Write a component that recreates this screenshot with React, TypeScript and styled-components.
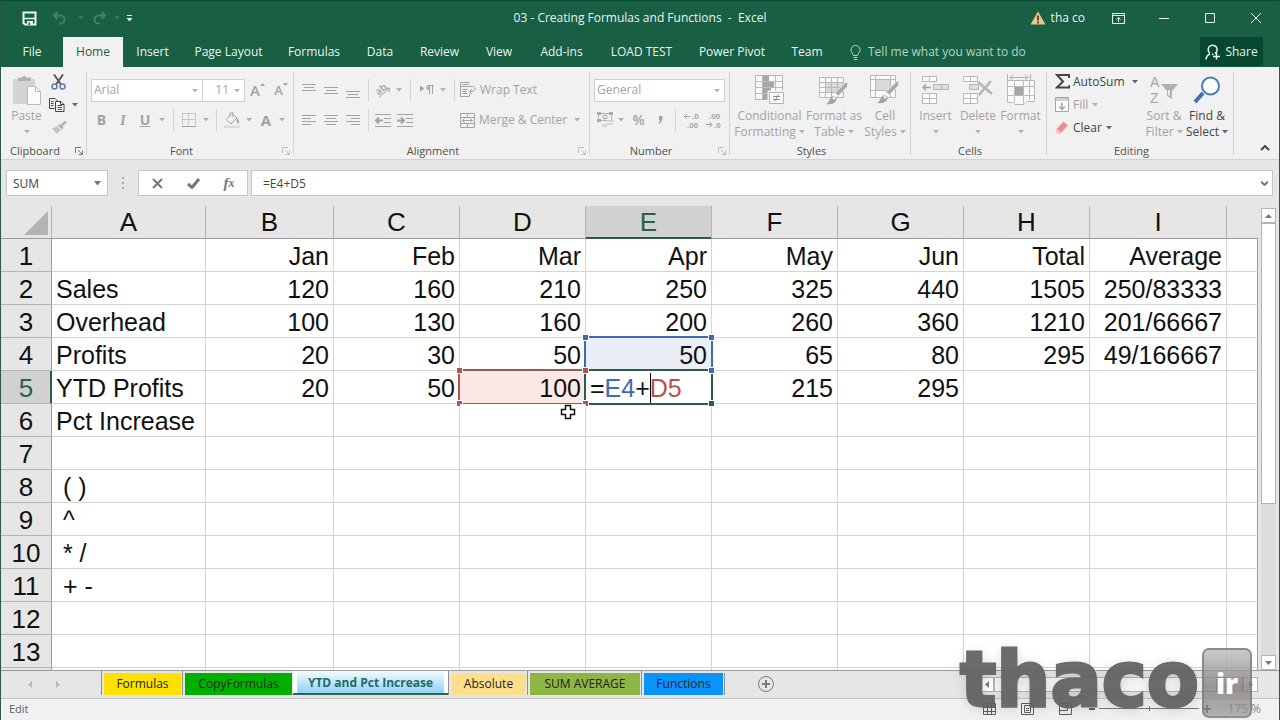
import React from 'react';
import styled, { createGlobalStyle, css } from 'styled-components';

const GlobalStyle = createGlobalStyle`
  *, *::before, *::after { box-sizing: border-box; }
  body { margin: 0; background: #e6e6e6; }
  button, input, select { font: inherit; color: inherit; margin: 0; padding: 0; border: 0; background: none; border-radius: 0; }
`;

const UI = '"Open Sans", "Noto Sans", sans-serif';
const SHEET = '"Liberation Sans", Arial, sans-serif';
const OFF = '#a3a3a3';

/* ---------- window ---------- */

const Window = styled.div`
  display: flex;
  flex-direction: column;
  height: 100vh;
  overflow: hidden;
  position: relative;
  border-left: 1px solid #2a5a43;
  border-right: 1px solid #2a5a43;
  background: #e6e6e6;
  font-family: ${UI};
  font-size: 12px;
  line-height: 16px;
  color: #444;
`;

const TitleBar = styled.header`
  display: grid;
  grid-template-columns: 1fr auto 1fr;
  align-items: center;
  height: 37px;
  flex: none;
  padding-bottom: 2px;
  background: #185f43;
  border-top: 1px solid #064a30;
  color: #eaf5ef;
`;

const QuickAccess = styled.div`
  display: flex;
  align-items: center;
  padding-left: 18px;
`;

const Title = styled.h1`
  margin: 0;
  font-size: 12px;
  line-height: 16px;
  font-weight: 400;
  white-space: pre;
`;

const WindowTools = styled.div`
  display: flex;
  align-items: center;
  justify-content: flex-end;
`;

const TitleButton = styled.button<{ $w: number; $dim?: boolean }>`
  display: flex;
  align-items: center;
  justify-content: center;
  width: ${p => p.$w}px;
  height: 32px;
  color: ${p => (p.$dim ? '#3f8265' : '#eaf5ef')};
`;

const Account = styled.a`
  display: flex;
  align-items: center;
  gap: 5px;
  margin-right: 10px;
  color: #eaf5ef;
  text-decoration: none;
`;

const MenuBar = styled.nav`
  display: flex;
  height: 30px;
  flex: none;
  background: #185f43;
  color: #eaf5ef;
`;

const MenuTab = styled.button<{ $w: number; $active?: boolean }>`
  width: ${p => p.$w}px;
  height: 30px;
  white-space: nowrap;
  ${p => p.$active && css`
    background: #f1f1f1;
    color: #1c6245;
  `}
`;

const TellMe = styled.label`
  display: flex;
  align-items: center;
  flex: 1;
  gap: 7px;
  padding-left: 14px;
  color: #b6d5c6;
`;

const TellInput = styled.input`
  width: 180px;
  outline: none;
  &::placeholder { color: #b6d5c6; opacity: 1; }
`;

const ShareButton = styled.button`
  display: flex;
  align-items: center;
  justify-content: center;
  gap: 4px;
  width: 63px;
  height: 29px;
  margin-right: 16px;
  background: #05482f;
`;

/* ---------- ribbon ---------- */

const Ribbon = styled.section`
  display: flex;
  height: 93px;
  flex: none;
  background: #f1f1f1;
  border-bottom: 1px solid #d2d2d2;
`;

const Group = styled.div<{ $w: number }>`
  display: flex;
  flex-direction: column;
  width: ${p => p.$w}px;
  height: 92px;
  flex: none;
  position: relative;
  &::after {
    content: '';
    position: absolute;
    right: 0;
    top: 5px;
    bottom: 4px;
    width: 1px;
    background: #d4d4d4;
  }
`;

const GroupBody = styled.div<{ $pad?: number }>`
  display: flex;
  height: 75px;
  padding: 3px 0 0 ${p => p.$pad ?? 0}px;
`;

const GroupLabel = styled.div`
  display: flex;
  align-items: center;
  justify-content: center;
  height: 17px;
  padding: 0 20px 0 2px;
  font-size: 11px;
  position: relative;
  color: #505050;
`;

const Launcher = styled.button<{ $dim?: boolean }>`
  display: flex;
  position: absolute;
  right: 4px;
  top: 5px;
  color: ${p => (p.$dim ? '#bdbdbd' : '#777')};
`;

const Rows = styled.div<{ $top?: number }>`
  display: flex;
  flex-direction: column;
  padding-top: ${p => p.$top ?? 0}px;
`;

const Row = styled.div<{ $h: number }>`
  display: flex;
  align-items: center;
  height: ${p => p.$h}px;
`;

const Tool = styled.button<{ $w: number; $on?: boolean; $left?: boolean; $gap?: number }>`
  display: flex;
  align-items: center;
  justify-content: ${p => (p.$left ? 'flex-start' : 'center')};
  gap: ${p => p.$gap ?? 4}px;
  width: ${p => p.$w}px;
  height: 22px;
  flex: none;
  white-space: nowrap;
  color: ${p => (p.$on ? '#444' : OFF)};
`;

const Glyph = styled.span<{ $serif?: boolean; $underline?: boolean; $size?: number; $weight?: number }>`
  font-size: ${p => p.$size ?? 14}px;
  font-weight: ${p => p.$weight ?? 700};
  line-height: 16px;
  font-family: ${p => (p.$serif ? '"Liberation Serif", serif' : UI)};
  font-style: ${p => (p.$serif ? 'italic' : 'normal')};
  text-decoration: ${p => (p.$underline ? 'underline' : 'none')};
`;

const Rule = styled.span<{ $w: number; $h?: number }>`
  display: flex;
  justify-content: center;
  width: ${p => p.$w}px;
  &::before {
    content: '';
    width: 1px;
    height: ${p => p.$h ?? 23}px;
    background: #d6d6d6;
  }
`;

const BigButton = styled.button<{ $w: number; $on?: boolean }>`
  display: flex;
  flex-direction: column;
  align-items: center;
  width: ${p => p.$w}px;
  height: 71px;
  padding-top: 3px;
  flex: none;
  white-space: nowrap;
  color: ${p => (p.$on ? '#444' : OFF)};
`;

const BigIcon = styled.span`
  display: flex;
  align-items: center;
  height: 34px;
  margin-bottom: 1px;
`;

const BigLine = styled.span`
  display: flex;
  align-items: center;
  gap: 3px;
  height: 16px;
`;

const Combo = styled.div<{ $w: number }>`
  position: relative;
  width: ${p => p.$w}px;
  height: 23px;
  margin-right: -1px;
  flex: none;
  border: 1px solid #cfcfcf;
  background: #fff;
  color: ${OFF};
  svg { position: absolute; right: 4px; top: 9px; pointer-events: none; }
`;

const ComboSelect = styled.select<{ $end?: boolean }>`
  appearance: none;
  width: 100%;
  height: 21px;
  padding: ${p => (p.$end ? '0 15px 0 0' : '0 15px 0 2px')};
  text-align: ${p => (p.$end ? 'right' : 'left')};
  text-align-last: ${p => (p.$end ? 'right' : 'left')};
`;

const RibbonEnd = styled.div`
  display: flex;
  flex: 1;
  align-items: flex-end;
  justify-content: flex-end;
  padding-right: 9px;
`;

/* ---------- formula bar ---------- */

const FormulaBar = styled.div`
  display: flex;
  align-items: center;
  height: 26px;
  margin: 10px 6px 10px 5px;
  flex: none;
`;

const Field = styled.div<{ $w?: number }>`
  display: flex;
  align-items: center;
  height: 26px;
  flex: ${p => (p.$w ? 'none' : '1')};
  width: ${p => (p.$w ? `${p.$w}px` : 'auto')};
  background: #fff;
  border: 1px solid #c6c6c6;
  color: #444;
`;

const FormulaField = styled(Field)`
  margin-left: 3px;
`;

const BarInput = styled.input<{ $pad: number }>`
  flex: 1;
  min-width: 0;
  height: 24px;
  padding: 1px 0 0 ${p => p.$pad}px;
  outline: none;
`;

const BarButton = styled.button<{ $w: number }>`
  display: flex;
  align-items: center;
  justify-content: center;
  width: ${p => p.$w}px;
  height: 24px;
  color: #777;
`;

const Grip = styled.span`
  display: flex;
  justify-content: center;
  width: 30px;
  color: #a8a8a8;
`;

/* ---------- sheet ---------- */

const Workspace = styled.main`
  display: flex;
  flex: 1;
  min-height: 0;
`;

const SheetArea = styled.div`
  flex: 1;
  min-width: 0;
  overflow: hidden;
`;

const Sheet = styled.table`
  width: 100%;
  table-layout: fixed;
  border-collapse: separate;
  border-spacing: 0;
  font-family: ${SHEET};
  font-size: 25px;
  line-height: 32px;
  color: #111;
`;

const Corner = styled.th`
  height: 33px;
  padding: 0 3px 3px 0;
  border-right: 1px solid #b4b4b4;
  border-bottom: 1px solid #9b9b9b;
  vertical-align: bottom;
  text-align: right;
  line-height: 0;
`;

const ColHead = styled.th<{ $active?: boolean; $blank?: boolean }>`
  height: 33px;
  padding: 0;
  font-size: 26px;
  font-weight: 400;
  border-right: ${p => (p.$blank ? 0 : 1)}px solid #b4b4b4;
  border-bottom: 1px solid ${p => (p.$active ? '#2b5c47' : '#9b9b9b')};
  box-shadow: ${p => (p.$active ? 'inset 0 -1px #2b5c47' : 'none')};
  background: ${p => (p.$active ? '#d0d1d0' : '#e6e6e6')};
  color: ${p => (p.$active ? '#2a6049' : '#111')};
`;

const RowHead = styled.th<{ $active?: boolean }>`
  height: 33px;
  padding: 2px 0 0;
  font-size: 26px;
  font-weight: 400;
  line-height: 30px;
  border-right: 1px solid ${p => (p.$active ? '#2b5c47' : '#9b9b9b')};
  border-bottom: 1px solid #b4b4b4;
  box-shadow: ${p => (p.$active ? 'inset -1px 0 #2b5c47' : 'none')};
  background: ${p => (p.$active ? '#d0d1d0' : '#e6e6e6')};
  color: ${p => (p.$active ? '#2a6049' : '#111')};
`;

const Cell = styled.td<{ $left?: boolean; $last?: boolean; $marked?: boolean }>`
  height: 33px;
  padding: 2px 4px 0;
  line-height: 30px;
  background: #fff;
  border-right: 1px solid ${p => (p.$last ? '#9b9b9b' : '#d4d4d4')};
  border-bottom: 1px solid #d4d4d4;
  text-align: ${p => (p.$left ? 'left' : 'right')};
  white-space: pre;
  ${p => p.$marked && css`
    position: relative;
    z-index: 1;
  `}
`;

const RangeBox = styled.span<{ $color: string; $fill: string }>`
  position: absolute;
  inset: -2px;
  border-style: solid;
  border-width: 2px;
  border-color: ${p => p.$color};
  background: ${p => p.$fill};
`;

const Handle = styled.i<{ $color: string; $x: 'left' | 'right'; $y: 'top' | 'bottom' }>`
  position: absolute;
  ${p => p.$x}: -4px;
  ${p => p.$y}: -4px;
  width: 7px;
  height: 7px;
  background: ${p => p.$color};
  border: 1px solid #fff;
`;

const CellText = styled.span`
  position: relative;
`;

const Ref = styled.span<{ $color: string }>`
  color: ${p => p.$color};
`;

const Caret = styled.span`
  display: inline-block;
  width: 1px;
  height: 30px;
  margin-right: -1px;
  vertical-align: top;
  background: #000;
`;

const Pointer = styled.svg`
  position: absolute;
  left: 100px;
  top: 0;
`;

const VScroll = styled.div`
  display: flex;
  flex-direction: column;
  width: 15px;
  margin: 2px 3px 0 3px;
  flex: none;
`;

const ScrollButton = styled.button`
  display: flex;
  align-items: center;
  justify-content: center;
  width: 15px;
  height: 15px;
  flex: none;
  background: #fff;
  border: 1px solid #b4b4b4;
  color: #777;
`;

const VTrack = styled.div`
  flex: 1;
  background: #dcdcdc;
`;

const VThumb = styled.div`
  height: 65%;
  background: #fff;
  border: 1px solid #b4b4b4;
`;

/* ---------- bottom bars ---------- */

const TabBar = styled.footer`
  display: flex;
  align-items: flex-start;
  height: 29px;
  flex: none;
  border-top: 1px solid #9b9b9b;
  border-bottom: 1px solid #c3c3c3;
`;

const NavButtons = styled.div`
  display: flex;
  width: 100px;
  height: 26px;
  padding-left: 15px;
  color: #b8b8b8;
`;

const NavButton = styled.button`
  display: flex;
  align-items: center;
  justify-content: center;
  width: 28px;
  height: 26px;
`;

const SheetTab = styled.button<{ $w: number; $fill: string; $active?: boolean }>`
  width: ${p => p.$w}px;
  height: 24px;
  padding: ${p => (p.$active ? '0 4px' : '1px 1px 0')};
  white-space: nowrap;
  color: #222;
  ${p => p.$active ? css`
    background: #fff;
    border-bottom: 2px solid #2c6650;
    color: #226a68;
    font-weight: 700;
  ` : css`
    border-left: 1px solid #8f8f8f;
  `}
  > span {
    display: block;
    height: 22px;
    line-height: ${p => (p.$active ? 24 : 22)}px;
    margin-left: ${p => (p.$active ? 0 : 1)}px;
    background: ${p => p.$fill};
  }
`;

const TabEnd = styled.span`
  width: 1px;
  height: 22px;
  margin-top: 2px;
  background: #8f8f8f;
`;

const AddSheet = styled.button`
  display: flex;
  align-items: center;
  justify-content: center;
  width: 82px;
  height: 26px;
  color: #7c7c7c;
`;

const HScroll = styled.div`
  display: flex;
  width: 279px;
  height: 15px;
  margin: 6px 21px 0 auto;
`;

const HTrack = styled.div`
  flex: 1;
  background: #dcdcdc;
  border: 1px solid #b4b4b4;
`;

const HThumb = styled.div`
  width: 90%;
  height: 13px;
  background: #f6f6f6;
  border-right: 1px solid #b4b4b4;
`;

const StatusBar = styled.div`
  display: flex;
  align-items: center;
  justify-content: space-between;
  height: 21px;
  flex: none;
  padding: 0 18px 2px 8px;
  background: #f1f1f1;
  font-size: 11px;
  color: #5c5c5c;
`;

const StatusTools = styled.div`
  display: flex;
  align-items: center;
`;

const StatusButton = styled.button<{ $w: number }>`
  display: flex;
  align-items: center;
  justify-content: center;
  width: ${p => p.$w}px;
  height: 18px;
`;

const ZoomTrack = styled.span`
  display: flex;
  justify-content: center;
  align-items: center;
  width: 100px;
  height: 7px;
  background: linear-gradient(#777, #777) center / 100% 1px no-repeat;
  &::before { content: ''; width: 1px; height: 5px; background: #777; }
`;

const ZoomValue = styled.span`
  margin-left: 12px;
  font-size: 12px;
  color: #8a8a8a;
`;

/* ---------- site logo ---------- */

const SiteMark = styled.div`
  position: absolute;
  right: 27px;
  bottom: 2px;
  display: flex;
  align-items: flex-end;
  gap: 3px;
  pointer-events: none;
`;

const SiteName = styled.span`
  font-family: "DejaVu Sans", sans-serif;
  font-weight: 700;
  font-size: 76px;
  line-height: 76px;
  color: #615f5d;
  -webkit-text-stroke: 3px #615f5d;
  opacity: 0.92;
  text-shadow: 0 2px 12px rgba(80, 80, 80, 0.28);
`;

const SiteKey = styled.span`
  display: flex;
  align-items: center;
  justify-content: center;
  width: 50px;
  height: 70px;
  border: 2px solid rgba(130, 127, 127, 0.8);
  border-radius: 7px;
  background: linear-gradient(rgba(190, 188, 188, 0.8), rgba(122, 118, 118, 0.75) 55%, rgba(150, 148, 148, 0.7));
  font-weight: 800;
  font-size: 28px;
  color: #fff;
`;

/* ---------- icons ---------- */

type IconProps = { w: number; h: number; children: React.ReactNode; sw?: number };
const Icon = ({ w, h, sw = 1, children }: IconProps) => (
  <svg width={w} height={h} viewBox={`0 0 ${w} ${h}`} fill="none" stroke="currentColor" strokeWidth={sw} aria-hidden="true">
    {children}
  </svg>
);

const Arrow = () => (
  <svg width="6" height="4" viewBox="0 0 6 4" aria-hidden="true"><path d="M0 0h6L3 3.5z" fill="currentColor" fillOpacity="0.8" /></svg>
);

const SaveIcon = () => (
  <Icon w={15} h={15} sw={2}><path d="M1.500 1.500h12v12H3l-1.500-1.500z" /><path d="M2 7.500h11" strokeWidth={1.500} /><path d="M5 10h6v4H5z" fill="currentColor" stroke="none" /><path d="M6.500 11.500h1.500v2.500h-1.500z" fill="#185f43" stroke="none" /></Icon>
);
const UndoIcon = () => <Icon w={15} h={14} sw={2}><path d="M5.500 1L2 4.500 5.500 8M2 4.500h6.500a4 4 0 010 8H7" /></Icon>;
const RedoIcon = () => <Icon w={15} h={14} sw={2}><path d="M9.500 1L13 4.500 9.500 8M13 4.500H6.500a4 4 0 000 8H8" /></Icon>;
const CustomizeIcon = () => <Icon w={7} h={7}><path d="M1 .5h5" /><path d="M.5 3h6L3.500 6.500z" fill="currentColor" stroke="none" /></Icon>;
const WarnIcon = () => (
  <svg width="16" height="14" viewBox="0 0 16 14" aria-hidden="true"><path d="M8 .5L15.500 13.500H.5z" fill="#e8c68c" /><path d="M7 4.500h2V9.500H7zM7 10.500h2v2H7z" fill="#7a3c22" /></svg>
);
const DisplayIcon = () => <Icon w={13} h={11}><path d="M.5.5h12v10H.5zM.5 2.500h12M6.500 9V4.500M4.500 6.500l2-2 2 2" /></Icon>;
const MinIcon = () => <Icon w={10} h={10}><path d="M0 5.500h10" /></Icon>;
const MaxIcon = () => <Icon w={10} h={10}><path d="M.5.5h9v9h-9z" /></Icon>;
const CloseIcon = () => <Icon w={10} h={10}><path d="M0 0l10 10M10 0L0 10" /></Icon>;
const BulbIcon = () => <Icon w={11} h={15}><path d="M3.500 10.500c0-2-2.500-2.500-2.500-5.500a4.500 4.500 0 019 0c0 3-2.500 3.500-2.500 5.500zM3.500 12.500h4M4 14.500h3" /></Icon>;
const ShareIcon = () => <Icon w={16} h={16} sw={1.500}><path d="M1 15.500c.3-3 1.500-4.500 4-5.500M10 9.500a4.500 4.500 0 10-5-.2M7 10.500l1.500-.3M11.500 9v6.500M8 12.500h7" /></Icon>;

const PasteIcon = () => (
  <Icon w={28} h={32}>
    <path d="M0 5h22v25H0z" fill="#d5d3d6" stroke="none" /><path d="M5 7V3.500h4a2.500 2.500 0 014.500 0h4.500V7z" fill="#b3b1b5" stroke="none" />
    <path d="M14.500 12.500h8l5 5v13h-13z" fill="#fbfbfd" stroke="#b9b8c4" /><path d="M22.500 12.500v5h5" stroke="#b9b8c4" />
  </Icon>
);
const CutIcon = () => (
  <Icon w={15} h={16}><path d="M3 .5l7 10M12 .5l-7 10" stroke="#5a5a5a" strokeWidth={2} /><circle cx="3.500" cy="12.500" r="2.500" stroke="#5b7fae" strokeWidth={1.500} /><circle cx="11.500" cy="12.500" r="2.500" stroke="#5b7fae" strokeWidth={1.500} /></Icon>
);
const CopyIcon = () => (
  <Icon w={16} h={14}><path d="M5.500 10.500h-5V.5H6l2 2v1" /><path d="M6.500 3.500H12l3 3v7H6.500z" fill="#fff" /><path d="M2 3.500h2.500M2 5.500h2.500M2 7.500h2.500M8.500 7.500h4.500M8.500 9.500h4.500M8.500 11.500h4.500M11.500 3.500v3H15" /></Icon>
);
const PainterIcon = () => (
  <Icon w={15} h={13}><path d="M0 8l5-3 4 4-4 4z" fill="#c4c4c4" stroke="none" /><path d="M6 4l2-1 3.500 4-1.500 1.500z" fill="#a8a8a8" stroke="none" /><path d="M9.500 4.500L14 .5" strokeWidth={2.500} stroke="#b2b2b2" /></Icon>
);
const BordersIcon = () => (
  <Icon w={14} h={14}><path d="M.5.5h13M.5.5v12M6.500.5v12M13.500.5v12M.5 6.500h13" strokeDasharray="1 1" /><path d="M0 13.500h14" /></Icon>
);
const BucketIcon = () => (
  <Icon w={17} h={16}><path d="M8 1.500L2 7.500l5 4.500 6-6-5-4.500zM6 4V1.500a1.500 1.500 0 013 0V5" /><path d="M13 6c2 1.500 2.500 3.500 1.500 6-2-1-2-3-1.500-6z" fill="currentColor" stroke="none" /><path d="M0 13.500h16v2.500H0z" fill="#dcdae0" stroke="none" /></Icon>
);
const GrowFont = ({ up }: { up?: boolean }) => (
  <>
    <Glyph $size={up ? 15 : 13} $weight={600}>A</Glyph>
    <svg width="5" height="14" viewBox="0 0 5 14" aria-hidden="true"><path d={up ? 'M0 3h5L2.500 0z' : 'M0 0h5L2.500 3z'} fill="currentColor" /></svg>
  </>
);
const Lines = ({ d }: { d: string }) => <Icon w={14} h={18}><path d={d} /></Icon>;
const OrientIcon = () => (
  <Icon w={18} h={17}>
    <text x="2" y="11" fontSize="10" fontWeight="600" fontFamily={UI} stroke="none" fill="currentColor" transform="rotate(-40 7 9)">ab</text>
    <path d="M5 15.500L15 6.500M15.500 6l-4 .5M15.500 6L15 10" />
  </Icon>
);
const DirectionIcon = () => (
  <Icon w={15} h={12}><path d="M0 1.500v6L4.500 4.500z" fill="currentColor" stroke="none" /><path d="M14 1.500H8.500a2 2 0 000 4h1M9.500 1v9M12.500 1v9" /><path d="M8 2h2v4H8z" fill="currentColor" stroke="none" /></Icon>
);
const IndentIcon = ({ out }: { out?: boolean }) => (
  <Icon w={16} h={13}><path d="M0 .5h16M9 4.500h7M9 8.500h7M0 12.500h16" /><path d={out ? 'M8 6.500H1M4 3.500L1 6.500l3 3' : 'M0 6.500h7M4 3.500l3 3-3 3'} strokeWidth={2} /></Icon>
);
const WrapIcon = () => (
  <Icon w={16} h={16}><path d="M.5 5.500v9h9v-3M.5 5.500V.5h9M.5 4.500h12M2.500 7.500h5M2.500 9.500h4M2.500 11.500h5M2.500 2.500h6" /><path d="M12.500 4.500c3.500 0 3.500 5-1 5H10M12 7l-2.500 2.500L12 12" /></Icon>
);
const MergeIcon = () => (
  <Icon w={15} h={15}><path d="M.5.5h14v14H.5zM.5 4.500h14M.5 10.500h14M7.500.5v4M7.500 10.500v4M2.500 7.500h10M4.500 5.500l-2 2 2 2M10.500 5.500l2 2-2 2" /></Icon>
);
const CurrencyIcon = () => (
  <Icon w={17} h={16}><path d="M1.500 1.500h13v7h-13z" stroke="#b4b4b4" /><path d="M0 0h4v3H0zM12 0h4v3h-4zM0 7h4v3H0z" fill="#ababab" stroke="none" /><circle cx="8" cy="5" r="2" /><path d="M10 8h7v2h-7zM9 11h7v2H9zM5 12h5v3H5z" fill="#d6d6d6" stroke="none" /></Icon>
);
const decimalText = (x: number, y: number, t: string) => (
  <text x={x} y={y} fontSize="8" fontWeight="600" fontFamily={SHEET} stroke="none" fill="currentColor">{t}</text>
);
const IncDecimal = () => <Icon w={16} h={18}><path d="M.5 5.500H6M3 3L.5 5.500 3 8" />{decimalText(8, 8, '.0')}{decimalText(3, 17, '.00')}</Icon>;
const DecDecimal = () => <Icon w={16} h={18}><path d="M0 13.500h6M3.500 11L6 13.500 3.500 16" />{decimalText(3, 8, '.00')}{decimalText(8, 17, '.0')}</Icon>;
const CondIcon = () => (
  <Icon w={30} h={30}>
    <path d="M.5.5h27v24H.5z" fill="#fafafa" stroke="#b4b4b4" /><path d="M.5 6.500h27M.5 12.500h27M.5 18.500h27M7.500.5v24M13.500.5v24M20.500.5v24" stroke="#bcbcbc" />
    <path d="M8 1h6v5h-6zM8 7h11v5H8zM8 13h8v5H8zM8 19h5v5H8z" fill="#a9a6aa" stroke="none" />
    <path d="M13.500 16.500h16v13h-16z" fill="#fafafa" stroke="#f1f1f1" strokeWidth={2} /><path d="M14.500 17.500h14v11h-14z" fill="#fafafa" stroke="#b4b4b4" /><path d="M18 21.500h7M18 24.500h7M23.500 19.500l-4 7" stroke="#8f8f8f" />
  </Icon>
);
const Brush = ({ x, y }: { x: number; y: number }) => (
  <g transform={`translate(${x} ${y})`} stroke="none"><path d="M20 0l2 .5-.5 4-9 9.500-4-3z" fill="#aaa8ab" stroke="#f1f1f1" /><path d="M0 22c3-1 3-5 6-7.500 3-1 5 1 4.500 3.500C9 22 4 23 0 22z" fill="#a5a3a6" /><circle cx="8" cy="16" r="1.500" fill="#f1f1f1" /></g>
);
const FormatTableIcon = () => (
  <Icon w={30} h={30}>
    <path d="M.5 2.500h24v20H.5z" fill="#fafafa" stroke="#b8b8b8" /><path d="M7 8h17v9H7z" fill="#d9d8dd" stroke="none" /><path d="M.5 7.500h24M.5 12.500h24M.5 17.500h24M6.500 2.500v20M12.500 2.500v20M18.500 2.500v20" stroke="#b8b8b8" />
    <Brush x={7} y={7} />
  </Icon>
);
const CellStylesIcon = () => (
  <Icon w={30} h={30}>
    <path d="M.5.5h25v22H.5z" fill="#fafafa" stroke="#b8b8b8" /><path d="M6 5h14v10H6z" fill="#d9d8dd" stroke="none" /><path d="M.5 4.500h25M.5 15.500h25M5.500.5v22M20.500.5v22" stroke="#b8b8b8" />
    <Brush x={7} y={6} />
  </Icon>
);
const InsertIcon = () => (
  <Icon w={27} h={28}>
    <path d="M.5.5h14v5H.5zM7.500.5v5" stroke="#b8b8b8" fill="#fff" /><path d="M.5 17.500h14v10H.5zM7.500 17.500v10M.5 22.500h14" stroke="#b8b8b8" fill="#fff" />
    <path d="M11.500 8.500h15v5h-15zM19.500 8.500v5" fill="#dddde0" stroke="#b8b8b8" /><path d="M1 11.500h8M4 8.500l-3 3 3 3" strokeWidth={1.500} />
  </Icon>
);
const DeleteIcon = () => (
  <Icon w={30} h={28}>
    <path d="M.5.5h14v5H.5zM7.500.5v5" stroke="#b8b8b8" fill="#fff" /><path d="M.5 17.500h14v10H.5zM7.500 17.500v10M.5 22.500h14" stroke="#b8b8b8" fill="#fff" />
    <path d="M6.500 8.500h9v5h-9z" fill="#dddde0" stroke="#b8b8b8" /><path d="M15 6l14 12M28 5L16 19" strokeWidth={2.500} stroke="#b4b4b4" />
  </Icon>
);
const FormatIcon = () => (
  <Icon w={28} h={32}>
    <path d="M.5 0v6M23.500 0v6M3 3.500h18M6 .5l-3 3 3 3M18 .5l3 3-3 3" stroke="#b0b0b0" />
    <path d="M.5 6.500h27v21H20l-3 3H8l-2-2H.5z" fill="#fafafa" stroke="#b8b8b8" /><path d="M.5 12.500h27M.5 21.500h27M7.500 6.500v22M16.500 6.500v23M22.500 6.500v20" stroke="#bcbcbc" />
    <path d="M8 13h8v8H8z" fill="#a8a6aa" stroke="none" />
  </Icon>
);
const SumIcon = () => <Icon w={15} h={15} sw={2}><path d="M14 4V1H2l6 6.500L2 13.500h12.500V11" /></Icon>;
const FillIcon = () => <Icon w={14} h={15}><path d="M.5.5h13v14H.5z" fill="#fff" /><path d="M1 1h12v3H1z" fill="#cfcfcf" stroke="none" /><path d="M7 5.500v7M4 9.500l3 3 3-3" strokeWidth={1.500} /></Icon>;
const EraserIcon = () => (
  <Icon w={14} h={14}><path d="M1.500 8L8.500.8l4.500 3.500L6 12z" fill="#ee8d94" stroke="none" /><path d="M1.500 8L6 12l-1 1H2.500L.5 11z" fill="#f6c3c6" stroke="none" /></Icon>
);
const SortIcon = () => (
  <Icon w={30} h={32}>
    <text x="1" y="13" fontSize="14" fontWeight="400" fontFamily={SHEET} stroke="none" fill="#a6a6a6">A</text>
    <text x="1" y="29" fontSize="14" fontWeight="400" fontFamily={SHEET} stroke="none" fill="#a6a6a6">Z</text>
    <path d="M12 10h17l-6 7v8l-5-3v-5z" fill="#b0b0b0" stroke="none" />
    <path d="M19 16v5l2 1V16z" fill="#e8e8e8" stroke="none" />
  </Icon>
);
const FindIcon = () => (
  <Icon w={28} h={28}><path d="M10 17L2 26" stroke="#3f6fae" strokeWidth={4} /><circle cx="17.500" cy="10" r="8.500" fill="#fff" stroke="#4a7ab8" strokeWidth={2} /></Icon>
);
const LaunchIcon = () => <Icon w={8} h={8}><path d="M.5 6V.5H6M3 3l4 4M7.500 3.500v4h-4" /></Icon>;

/* ---------- data ---------- */

const menu: [string, number][] = [
  ['File', 62], ['Home', 60], ['Insert', 59], ['Page Layout', 93], ['Formulas', 78], ['Data', 54], ['Review', 65],
  ['View', 54], ['Add-ins', 71], ['LOAD TEST', 89], ['Power Pivot', 92], ['Team', 58],
];

const columns = ['A', 'B', 'C', 'D', 'E', 'F', 'G', 'H', 'I'];
const columnWidths = [154, 128, 126, 126, 126, 126, 126, 126, 137];

const rows: string[][] = [
  ['', 'Jan', 'Feb', 'Mar', 'Apr', 'May', 'Jun', 'Total', 'Average'],
  ['Sales', '120', '160', '210', '250', '325', '440', '1505', '250/83333'],
  ['Overhead', '100', '130', '160', '200', '260', '360', '1210', '201/66667'],
  ['Profits', '20', '30', '50', '50', '65', '80', '295', '49/166667'],
  ['YTD Profits', '20', '50', '100', '', '215', '295', '', ''],
  ['Pct Increase'], [], [' ( )'], [' ^'], [' * /'], [' + -'], [], [],
];

const sheets: { name: string; w: number; fill: string; active?: boolean }[] = [
  { name: 'Formulas', w: 81, fill: '#ffe100' },
  { name: 'CopyFormulas', w: 111, fill: '#00b000' },
  { name: 'YTD and Pct Increase', w: 155, fill: 'linear-gradient(#f4fbfe, #8fd3f2)', active: true },
  { name: 'Absolute', w: 79, fill: '#ffdf8c' },
  { name: 'SUM AVERAGE', w: 114, fill: '#8db645' },
  { name: 'Functions', w: 83, fill: '#0a93f8' },
];

const BLUE = '#3f68ae';
const RED = '#b8504b';
const GREEN = '#2b5c47';
const BROWN = '#86605a';

/* cells that carry a range outline or the mouse pointer */
const marked = ['E4', 'D5', 'E5', 'D6'];

const Handles = ({ color }: { color: string }) => (
  <>
    <Handle $color={color} $x="left" $y="top" />
    <Handle $color={color} $x="right" $y="top" />
    <Handle $color={color} $x="left" $y="bottom" />
    <Handle $color={color} $x="right" $y="bottom" />
  </>
);

function CellContent({ id, text }: { id: string; text: string }) {
  if (id === 'E4') {
    return <><RangeBox $color={BLUE} $fill="#e9eef9"><Handles color={BLUE} /></RangeBox><CellText>{text}</CellText></>;
  }
  if (id === 'D5') {
    return <><RangeBox $color={`${BROWN} ${RED}`} $fill="#fde8e5"><Handles color={RED} /></RangeBox><CellText>{text}</CellText></>;
  }
  if (id === 'E5') {
    return (
      <>
        <RangeBox $color={GREEN} $fill="transparent">
          <Handle $color={RED} $x="left" $y="top" />
          <Handle $color={RED} $x="left" $y="bottom" />
          <Handle $color={BLUE} $x="right" $y="top" />
          <Handle $color={GREEN} $x="right" $y="bottom" />
        </RangeBox>
        <CellText>=<Ref $color="#4469b4">E4</Ref>+<Caret /><Ref $color="#bb5149">D5</Ref></CellText>
      </>
    );
  }
  if (id === 'D6') {
    return (
      <Pointer width="16" height="17" viewBox="0 0 16 17" aria-hidden="true">
        <path d="M5.500 1.500h5v4h4v5h-4v4h-5v-4h-4v-5h4z" fill="#fff" stroke="#111" strokeWidth="1.500" />
      </Pointer>
    );
  }
  return <>{text}</>;
}

function Caption({ children, launch, dim }: { children: string; launch?: boolean; dim?: boolean }) {
  return (
    <GroupLabel>
      {children}
      {launch && <Launcher $dim={dim} aria-label={`${children} settings`}><LaunchIcon /></Launcher>}
    </GroupLabel>
  );
}

function Big({ w, on, icon, lines }: { w: number; on?: boolean; icon: React.ReactNode; lines: string[] }) {
  return (
    <BigButton $w={w} $on={on}>
      <BigIcon>{icon}</BigIcon>
      <BigLine>{lines[0]}</BigLine>
      <BigLine>{lines[1]}<Arrow /></BigLine>
    </BigButton>
  );
}

export default function App() {
  return (
    <Window>
      <GlobalStyle />
      <TitleBar>
        <QuickAccess>
          <TitleButton $w={21} aria-label="Save"><SaveIcon /></TitleButton>
          <TitleButton $w={38} $dim aria-label="Undo"><UndoIcon /></TitleButton>
          <TitleButton $w={6} $dim aria-label="Undo history"><Arrow /></TitleButton>
          <TitleButton $w={30} $dim aria-label="Redo"><RedoIcon /></TitleButton>
          <TitleButton $w={6} $dim aria-label="Redo history"><Arrow /></TitleButton>
          <TitleButton $w={19} aria-label="Customize"><CustomizeIcon /></TitleButton>
        </QuickAccess>
        <Title>03 - Creating Formulas and Functions  -  Excel</Title>
        <WindowTools>
          <Account href="#account"><WarnIcon />tha co</Account>
          <TitleButton $w={46} aria-label="Ribbon display"><DisplayIcon /></TitleButton>
          <TitleButton $w={46} aria-label="Minimize"><MinIcon /></TitleButton>
          <TitleButton $w={46} aria-label="Maximize"><MaxIcon /></TitleButton>
          <TitleButton $w={46} aria-label="Close"><CloseIcon /></TitleButton>
        </WindowTools>
      </TitleBar>
      <MenuBar>
        {menu.map(([name, w]) => <MenuTab key={name} $w={w} $active={name === 'Home'}>{name}</MenuTab>)}
        <TellMe><BulbIcon /><TellInput placeholder="Tell me what you want to do" aria-label="Tell me" /></TellMe>
        <ShareButton><ShareIcon />Share</ShareButton>
      </MenuBar>

      <Ribbon>
        <Group $w={86}>
          <GroupBody $pad={5}>
            <Big w={41} icon={<PasteIcon />} lines={['Paste', '']} />
            <Rows>
              <Row $h={23}><Tool $w={22} $on aria-label="Cut"><CutIcon /></Tool></Row>
              <Row $h={23}><Tool $w={32} $on $gap={7} aria-label="Copy"><CopyIcon /><Arrow /></Tool></Row>
              <Row $h={23}><Tool $w={24} aria-label="Format painter"><PainterIcon /></Tool></Row>
            </Rows>
          </GroupBody>
          <Caption launch>Clipboard</Caption>
        </Group>

        <Group $w={207}>
          <GroupBody $pad={4}>
            <Rows $top={5}>
              <Row $h={30}>
                <Combo $w={112}><ComboSelect aria-label="Font"><option>Arial</option></ComboSelect><Arrow /></Combo>
                <Combo $w={43}><ComboSelect $end aria-label="Font size"><option>11</option></ComboSelect><Arrow /></Combo>
                <Tool $w={27} $gap={0} aria-label="Grow font"><GrowFont up /></Tool>
                <Tool $w={20} $gap={0} aria-label="Shrink font"><GrowFont /></Tool>
              </Row>
              <Row $h={30}>
                <Tool $w={21}><Glyph>B</Glyph></Tool>
                <Tool $w={22}><Glyph $serif $size={15}>I</Glyph></Tool>
                <Tool $w={22}><Glyph $underline>U</Glyph></Tool>
                <Tool $w={12} aria-label="Underline style"><Arrow /></Tool>
                <Rule $w={10} />
                <Tool $w={22} aria-label="Borders"><BordersIcon /></Tool>
                <Tool $w={12} aria-label="Border style"><Arrow /></Tool>
                <Rule $w={9} />
                <Tool $w={22} aria-label="Fill color"><BucketIcon /></Tool>
                <Tool $w={12} aria-label="Fill palette"><Arrow /></Tool>
                <Tool $w={22} aria-label="Font color"><Glyph $size={15}>A</Glyph></Tool>
                <Tool $w={10} aria-label="Font palette"><Arrow /></Tool>
              </Row>
            </Rows>
          </GroupBody>
          <Caption launch dim>Font</Caption>
        </Group>

        <Group $w={296}>
          <GroupBody $pad={4}>
            <Rows $top={5}>
              <Row $h={30}>
                <Tool $w={22} aria-label="Top align"><Lines d="M0 3.500h14M2 6.500h10M0 9.500h14" /></Tool>
                <Tool $w={22} aria-label="Middle align"><Lines d="M0 6.500h14M2 9.500h10M0 12.500h14" /></Tool>
                <Tool $w={22} aria-label="Bottom align"><Lines d="M0 10.500h14M2 13.500h10M0 16.500h14" /></Tool>
                <Rule $w={8} />
                <Tool $w={22} aria-label="Orientation"><OrientIcon /></Tool>
                <Tool $w={10} aria-label="Orientation menu"><Arrow /></Tool>
                <Rule $w={12} />
                <Tool $w={22} aria-label="Text direction"><DirectionIcon /></Tool>
                <Tool $w={10} aria-label="Direction menu"><Arrow /></Tool>
                <Rule $w={12} />
                <Tool $w={90} $left><WrapIcon />Wrap Text</Tool>
              </Row>
              <Row $h={30}>
                <Tool $w={22} aria-label="Align left"><Lines d="M0 4.500h14M0 7.500h9M0 10.500h14M0 13.500h9" /></Tool>
                <Tool $w={22} aria-label="Center"><Lines d="M0 4.500h14M2 7.500h10M0 10.500h14M2 13.500h10" /></Tool>
                <Tool $w={22} aria-label="Align right"><Lines d="M0 4.500h14M5 7.500h9M0 10.500h14M5 13.500h9" /></Tool>
                <Rule $w={8} />
                <Tool $w={22} aria-label="Decrease indent"><IndentIcon out /></Tool>
                <Tool $w={22} aria-label="Increase indent"><IndentIcon /></Tool>
                <Rule $w={44} $h={0} />
                <Tool $w={112} $left><MergeIcon />Merge &amp; Center</Tool>
                <Tool $w={10} aria-label="Merge menu"><Arrow /></Tool>
              </Row>
            </Rows>
          </GroupBody>
          <Caption launch dim>Alignment</Caption>
        </Group>

        <Group $w={140}>
          <GroupBody $pad={4}>
            <Rows $top={5}>
              <Row $h={30}>
                <Combo $w={131}><ComboSelect aria-label="Number format"><option>General</option></ComboSelect><Arrow /></Combo>
              </Row>
              <Row $h={30}>
                <Tool $w={22} aria-label="Accounting format"><CurrencyIcon /></Tool>
                <Tool $w={10} aria-label="Currency menu"><Arrow /></Tool>
                <Tool $w={25}><Glyph $size={14} $weight={600}>%</Glyph></Tool>
                <Tool $w={18} aria-label="Comma style"><Icon w={5} h={8}><path d="M1 0h3.500v3.500L2 7.500H.5L2 4H1z" fill="currentColor" stroke="none" /></Icon></Tool>
                <Rule $w={12} />
                <Tool $w={22} aria-label="Increase decimal"><IncDecimal /></Tool>
                <Tool $w={22} aria-label="Decrease decimal"><DecDecimal /></Tool>
              </Row>
            </Rows>
          </GroupBody>
          <Caption launch dim>Number</Caption>
        </Group>

        <Group $w={181}>
          <GroupBody $pad={4}>
            <Big w={71} icon={<CondIcon />} lines={['Conditional', 'Formatting']} />
            <Big w={58} icon={<FormatTableIcon />} lines={['Format as', 'Table']} />
            <Big w={44} icon={<CellStylesIcon />} lines={['Cell', 'Styles']} />
          </GroupBody>
          <Caption>Styles</Caption>
        </Group>

        <Group $w={136}>
          <GroupBody $pad={3}>
            <Big w={43} icon={<InsertIcon />} lines={['Insert', '']} />
            <Big w={42} icon={<DeleteIcon />} lines={['Delete', '']} />
            <Big w={43} icon={<FormatIcon />} lines={['Format', '']} />
          </GroupBody>
          <Caption>Cells</Caption>
        </Group>

        <Group $w={187}>
          <GroupBody $pad={8}>
            <Rows>
              <Row $h={23}>
                <Tool $w={74} $left $on $gap={3}><SumIcon />AutoSum</Tool>
                <Tool $w={12} $on aria-label="AutoSum menu"><Arrow /></Tool>
              </Row>
              <Row $h={23}><Tool $w={74} $left><FillIcon />Fill<Arrow /></Tool></Row>
              <Row $h={23}><Tool $w={74} $left $on><EraserIcon />Clear<Arrow /></Tool></Row>
            </Rows>
            <Big w={46} icon={<SortIcon />} lines={['Sort &', 'Filter']} />
            <Big w={40} on icon={<FindIcon />} lines={['Find &', 'Select']} />
          </GroupBody>
          <Caption>Editing</Caption>
        </Group>
        <RibbonEnd>
          <Tool $w={10} $on aria-label="Collapse ribbon"><Icon w={10} h={6} sw={2}><path d="M1 5l4-4 4 4" /></Icon></Tool>
        </RibbonEnd>
      </Ribbon>

      <FormulaBar>
        <Field $w={102}>
          <BarInput $pad={6} defaultValue="SUM" aria-label="Name box" />
          <BarButton $w={20} aria-label="Names"><Icon w={7} h={5}><path d="M0 0h7L3.500 4.500z" fill="currentColor" stroke="none" /></Icon></BarButton>
        </Field>
        <Grip><Icon w={2} h={13} sw={2}><path d="M1 0v13" strokeDasharray="2 3" /></Icon></Grip>
        <Field $w={110}>
          <BarButton $w={36} aria-label="Cancel"><Icon w={11} h={11} sw={2}><path d="M1 1l9 9M10 1L1 10" /></Icon></BarButton>
          <BarButton $w={36} aria-label="Enter"><Icon w={13} h={11} sw={3}><path d="M1 6l4 3.500L12 1" /></Icon></BarButton>
          <BarButton $w={36} aria-label="Insert function"><Glyph $serif $size={15}>f</Glyph><Glyph $serif $size={12}>x</Glyph></BarButton>
        </Field>
        <FormulaField>
          <BarInput $pad={11} defaultValue="=E4+D5" aria-label="Formula" />
          <BarButton $w={16} aria-label="Expand"><Icon w={7} h={5} sw={2}><path d="M0 .5L3.500 4 7 .5" /></Icon></BarButton>
        </FormulaField>
      </FormulaBar>

      <Workspace>
        <SheetArea>
          <Sheet>
            <colgroup>
              <col width={51} />
              {columnWidths.map((w, i) => <col key={i} width={w} />)}
              <col />
            </colgroup>
            <thead>
              <tr>
                <Corner aria-label="Select all"><svg width="24" height="24" viewBox="0 0 24 24"><path d="M24 0v24H0z" fill="#b3b3b3" /></svg></Corner>
                {columns.map(c => <ColHead key={c} $active={c === 'E'} scope="col">{c}</ColHead>)}
                <ColHead $blank />
              </tr>
            </thead>
            <tbody>
              {rows.map((cells, r) => (
                <tr key={r}>
                  <RowHead $active={r === 4} scope="row">{r + 1}</RowHead>
                  {columns.map((c, i) => (
                    <Cell key={c} $left={i === 0 || (c === 'E' && r === 4)} $marked={marked.includes(`${c}${r + 1}`)}>
                      <CellContent id={`${c}${r + 1}`} text={cells[i] ?? ''} />
                    </Cell>
                  ))}
                  <Cell $last />
                </tr>
              ))}
              <tr><RowHead />{columns.map(c => <Cell key={c} />)}<Cell $last /></tr>
            </tbody>
          </Sheet>
        </SheetArea>
        <VScroll>
          <ScrollButton aria-label="Scroll up"><Icon w={7} h={4}><path d="M0 4h7L3.500 0z" fill="currentColor" stroke="none" /></Icon></ScrollButton>
          <VTrack><VThumb /></VTrack>
          <ScrollButton aria-label="Scroll down"><Icon w={7} h={4}><path d="M0 0h7L3.500 4z" fill="currentColor" stroke="none" /></Icon></ScrollButton>
        </VScroll>
      </Workspace>

      <TabBar>
        <NavButtons>
          <NavButton aria-label="Previous sheet"><Icon w={4} h={7}><path d="M4 0v7L0 3.500z" fill="currentColor" stroke="none" /></Icon></NavButton>
          <NavButton aria-label="Next sheet"><Icon w={4} h={7}><path d="M0 0v7l4-3.500z" fill="currentColor" stroke="none" /></Icon></NavButton>
        </NavButtons>
        {sheets.map(s => <SheetTab key={s.name} $w={s.w} $fill={s.fill} $active={s.active}><span>{s.name}</span></SheetTab>)}
        <TabEnd />
        <AddSheet aria-label="New sheet"><Icon w={16} h={16}><circle cx="8" cy="8" r="7.500" /><path d="M8 4v8M4 8h8" strokeWidth={2} /></Icon></AddSheet>
        <HScroll>
          <ScrollButton aria-label="Scroll left"><Icon w={4} h={7}><path d="M4 0v7L0 3.500z" fill="currentColor" stroke="none" /></Icon></ScrollButton>
          <HTrack><HThumb /></HTrack>
          <ScrollButton aria-label="Scroll right"><Icon w={4} h={7}><path d="M0 0v7l4-3.500z" fill="currentColor" stroke="none" /></Icon></ScrollButton>
        </HScroll>
      </TabBar>
      <StatusBar>
        <span>Edit</span>
        <StatusTools>
          <StatusButton $w={38} aria-label="Normal view"><Icon w={13} h={12}><path d="M.5.5h12v11H.5zM4.500.5v11M8.500.5v11M.5 4.500h12M.5 8.500h12" /></Icon></StatusButton>
          <StatusButton $w={38} aria-label="Page layout view"><Icon w={13} h={12}><path d="M.5.5h12v11H.5zM3.500 2.500h6v7h-6zM5 5.500h3M5 7.500h3" /></Icon></StatusButton>
          <StatusButton $w={38} aria-label="Page break view"><Icon w={13} h={12}><path d="M.5.5h12v11H.5zM.5 7.500h8v-7" /></Icon></StatusButton>
          <StatusButton $w={15} aria-label="Zoom out"><Icon w={6} h={6} sw={2}><path d="M0 3h6" /></Icon></StatusButton>
          <ZoomTrack />
          <StatusButton $w={16} aria-label="Zoom in"><Icon w={8} h={8} sw={2}><path d="M0 4h8M4 0v8" /></Icon></StatusButton>
          <ZoomValue>175 %</ZoomValue>
        </StatusTools>
      </StatusBar>

      <SiteMark>
        <SiteName>thaco</SiteName>
        <SiteKey>ir</SiteKey>
      </SiteMark>
    </Window>
  );
}
